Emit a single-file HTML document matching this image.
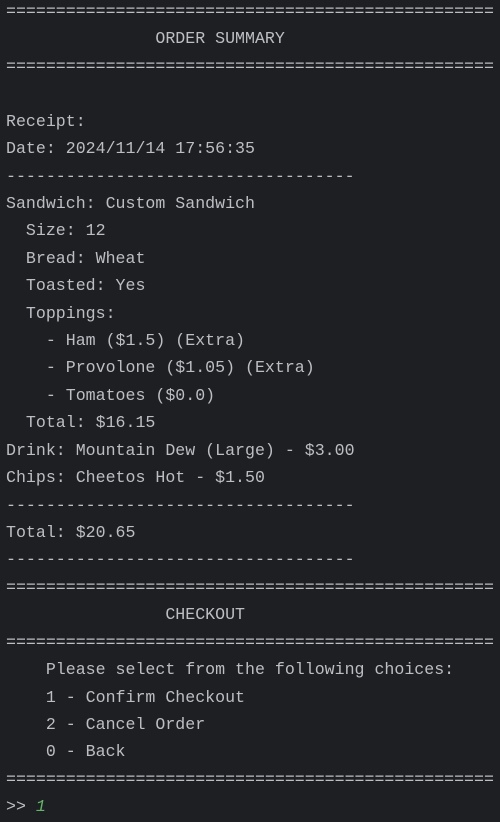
<!DOCTYPE html>
<html><head><style>
html,body{margin:0;padding:0;background:#1e1f22;width:500px;height:822px;overflow:hidden}
pre{margin:0;position:absolute;left:6px;top:-2px;font-family:"Liberation Mono","DejaVu Sans Mono",monospace;font-size:16.6px;line-height:27.42px;color:#bcbec4;white-space:pre}
i{color:#5fb865;font-style:italic}
</style></head><body>
<pre>=================================================
               ORDER SUMMARY
=================================================

Receipt:
Date: 2024/11/14 17:56:35
-----------------------------------
Sandwich: Custom Sandwich
  Size: 12
  Bread: Wheat
  Toasted: Yes
  Toppings:
    - Ham ($1.5) (Extra)
    - Provolone ($1.05) (Extra)
    - Tomatoes ($0.0)
  Total: $16.15
Drink: Mountain Dew (Large) - $3.00
Chips: Cheetos Hot - $1.50
-----------------------------------
Total: $20.65
-----------------------------------
=================================================
                CHECKOUT
=================================================
    Please select from the following choices:
    1 - Confirm Checkout
    2 - Cancel Order
    0 - Back
=================================================
&gt;&gt; <i>1</i></pre>
</body></html>
